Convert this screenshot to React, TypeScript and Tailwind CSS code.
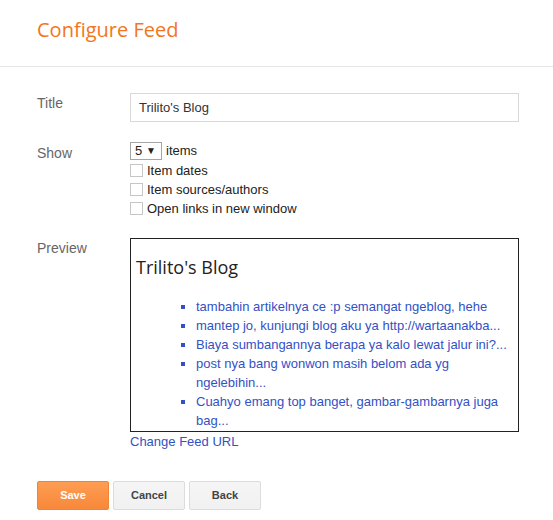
export default function App() {
  const items = [
    'tambahin artikelnya ce :p semangat ngeblog, hehe',
    'mantep jo, kunjungi blog aku ya http://wartaanakba...',
    'Biaya sumbangannya berapa ya kalo lewat jalur ini?...',
    'post nya bang wonwon masih belom ada yg ngelebihin...',
    'Cuahyo emang top banget, gambar-gambarnya juga bag...',
  ]

  return (
    <div className="w-[553px] h-[520px] bg-white font-['Liberation_Sans',Arial,sans-serif] text-[13px] text-[#222]">
      <div className="h-[67px] border-b border-[#e5e5e5] pl-[37px] pt-[16px]">
        <h1 className="font-['Open_Sans',sans-serif] text-[20px] leading-[28px] text-[#f37521]">
          Configure Feed
        </h1>
      </div>

      <div className="pl-[37px] pr-[34px] pt-[26px]">
        {/* title */}
        <div className="flex">
          <div className="w-[93px] text-[14px] text-[#666]">Title</div>
          <div className="flex h-[29px] w-[389px] items-center border border-[#d9d9d9] px-[8px] text-[13px] text-[#333]">
            Trilito's Blog
          </div>
        </div>

        {/* show */}
        <div className="mt-[19px] flex">
          <div className="w-[93px] pt-[2px] text-[14px] text-[#666]">Show</div>
          <div className="flex flex-col">
            <div className="flex h-[20px] items-center gap-[4px]">
              <div className="flex h-[18px] w-[32px] items-center justify-between border border-[#a6a6a6] pl-[4px] pr-[5px]">
                <span>5</span>
                <span className="text-[10px] leading-none">▼</span>
              </div>
              <span>items</span>
            </div>
            {['Item dates', 'Item sources/authors', 'Open links in new window'].map((t) => (
              <label key={t} className="flex h-[19px] items-center gap-[4px]">
                <span className="h-[13px] w-[13px] border border-[#c6c6c6] bg-white" />
                <span>{t}</span>
              </label>
            ))}
          </div>
        </div>

        {/* preview */}
        <div className="mt-[20px] flex">
          <div className="w-[93px] text-[14px] text-[#666]">Preview</div>
          <div className="flex flex-col">
            <div className="h-[194px] w-[389px] overflow-hidden border border-[#222] px-[5px] pt-[16px]">
              <h2 className="font-['Open_Sans',sans-serif] text-[18px] leading-[24px] text-[#222]">
                Trilito's Blog
              </h2>
              <ul className="mt-[18px] list-[square] pl-[60px] text-[#3351c5] leading-[19px]">
                {items.map((t) => (
                  <li key={t}>{t}</li>
                ))}
              </ul>
            </div>
            <a className="leading-[19px] text-[#3351c5]">Change Feed URL</a>
          </div>
        </div>

        {/* buttons */}
        <div className="mt-[30px] flex gap-[4px] text-[11px] font-bold">
          <button className="h-[29px] w-[72px] rounded-[2px] border border-[#f08433] bg-gradient-to-b from-[#fe9d52] to-[#f7883a] text-white">
            Save
          </button>
          <button className="h-[29px] w-[72px] rounded-[2px] border border-[#dcdcdc] bg-gradient-to-b from-[#f5f5f5] to-[#f1f1f1] text-[#444]">
            Cancel
          </button>
          <button className="h-[29px] w-[72px] rounded-[2px] border border-[#dcdcdc] bg-gradient-to-b from-[#f5f5f5] to-[#f1f1f1] text-[#444]">
            Back
          </button>
        </div>
      </div>
    </div>
  )
}
